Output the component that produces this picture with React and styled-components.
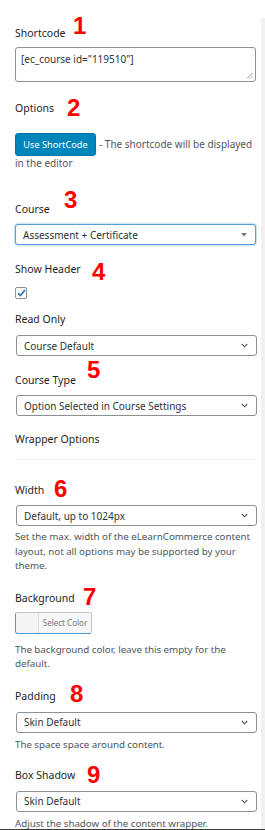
import React from "react";
import styled, { createGlobalStyle } from "styled-components";

const Global = createGlobalStyle`
  html, body { margin: 0; padding: 0; background: #fff; }
  body { font-family: "Noto Sans", "Open Sans", sans-serif; color: #1e1e1e; }
  * { box-sizing: border-box; }
`;

const Page = styled.div`
  display: flex;
  width: 265px;
  height: 830px;
  overflow: hidden;
  border-bottom: 1px solid #3c3c3c;
`;

const Panel = styled.div`
  width: 261px;
  padding: 0 5px 0 15px;
`;

const Track = styled.div`
  width: 4px;
  margin-top: 18px;
  background: #f0f0f1;
`;

const Field = styled.div`
  margin-top: ${(p) => p.$mt}px;
`;

const Label = styled.div`
  position: relative;
  font-size: 10.5px;
  line-height: 14px;
  height: 14px;
  color: #1e1e1e;
  white-space: nowrap;
`;

const Marker = styled.span`
  position: absolute;
  left: ${(p) => p.$x}px;
  top: ${(p) => p.$y}px;
  font-family: "Liberation Sans", Arial, sans-serif;
  font-weight: bold;
  font-size: 24px;
  line-height: 24px;
  color: #ff0000;
`;

const TextArea = styled.div`
  margin-top: 7px;
  position: relative;
  width: 241px;
  height: 35px;
  border: 1px solid #8c8f94;
  border-radius: 3px;
  padding: 4px 5px;
  font-size: 10px;
  line-height: 14px;
  color: #2c3338;
`;

const Grip = styled.svg`
  position: absolute;
  right: 2px;
  bottom: 2px;
`;

const Desc = styled.div`
  margin-top: 18px;
  margin-right: -5px;
  font-size: 10px;
  line-height: 15px;
  color: #50575e;
`;

const DescLine = styled.div`
  display: flex;
  align-items: center;
  gap: 3px;
  white-space: nowrap;
`;

const PrimaryButton = styled.span`
  display: inline-flex;
  align-items: center;
  justify-content: center;
  flex: none;
  width: 81px;
  height: 23px;
  background: #0085ba;
  border: 1px solid #0073aa;
  border-radius: 3px;
  color: #fff;
  font-size: 9.2px;
  white-space: nowrap;
`;

const DescRest = styled.div`
  margin-top: 0;
`;

const Select = styled.div`
  margin-top: ${(p) => p.$mt ?? 8}px;
  margin-left: ${(p) => p.$ml ?? 1}px;
  width: 241px;
  height: 21px;
  display: flex;
  align-items: center;
  justify-content: space-between;
  padding: 0 8px 0 7px;
  border: 1px solid ${(p) => (p.$focus ? "#5b9dd9" : "#8c8f94")};
  box-shadow: ${(p) => (p.$focus ? "0 0 2px rgba(30,140,190,.8)" : "none")};
  border-radius: 3px;
  font-size: 10px;
  color: #2c3338;
  background: #fff;
`;

const Check = styled.div`
  margin-top: 11px;
  width: 12px;
  height: 12px;
  border: 1px solid #8c8f94;
  border-radius: 2px;
  display: flex;
  align-items: center;
  justify-content: center;
`;

const Divider = styled.div`
  margin-top: 13px;
  width: 241px;
  height: 1px;
  background: #f0f0f1;
`;

const Help = styled.div`
  margin-top: ${(p) => p.$mt ?? 4}px;
  margin-right: -5px;
  font-size: 9.8px;
  letter-spacing: -0.05px;
  line-height: ${(p) => p.$lh ?? 14}px;
  color: #50575e;
`;

const ColorButton = styled.div`
  margin-top: 7px;
  display: flex;
  width: 77px;
  height: 22px;
  border: 1px solid #c3c4c7;
  border-left-color: #4f94d4;
  border-bottom-color: #4f94d4;
  border-radius: 3px;
  overflow: hidden;
`;

const Swatch = styled.div`
  width: 23px;
  background: #f3f4f5;
  border-right: 1px solid #dcdcde;
`;

const ColorText = styled.div`
  flex: 1;
  display: flex;
  align-items: center;
  justify-content: center;
  background: #f6f7f7;
  font-size: 8px;
  color: #787c82;
`;

const Chevron = () => (
  <svg width="7" height="5" viewBox="0 0 7 5">
    <path d="M0.8 1 L3.5 3.8 L6.2 1" fill="none" stroke="#50575e" strokeWidth="1.1" />
  </svg>
);

const Caret = () => (
  <svg width="6" height="4" viewBox="0 0 6 4">
    <path d="M0 0 H6 L3 3.5 Z" fill="#777" />
  </svg>
);

const Dropdown = ({ value, mt, focus, ml }) => (
  <Select $mt={mt} $focus={focus} $ml={ml}>
    <span>{value}</span>
    {focus ? <Caret /> : <Chevron />}
  </Select>
);

export default function App() {
  return (
    <>
      <Global />
      <Page>
        <Panel>
          <Field $mt={26}>
            <Label>
              Shortcode<Marker $x={58} $y={-12}>1</Marker>
            </Label>
            <TextArea>
              [ec_course id="119510"]
              <Grip width="7" height="7" viewBox="0 0 7 7">
                <path d="M1 6.5 L6.5 1 M4 6.5 L6.5 4" stroke="#8c8f94" strokeWidth="0.9" />
              </Grip>
            </TextArea>
          </Field>

          <Field $mt={19}>
            <Label>
              Options<Marker $x={52} $y={-5}>2</Marker>
            </Label>
            <Desc>
              <DescLine>
                <PrimaryButton>Use ShortCode</PrimaryButton>
                <span>- The shortcode will be displayed</span>
              </DescLine>
              <DescRest>in the editor</DescRest>
            </Desc>
          </Field>

          <Field $mt={31}>
            <Label>
              Course<Marker $x={49} $y={-14}>3</Marker>
            </Label>
            <Dropdown value="Assessment + Certificate" focus ml={0} />
          </Field>

          <Field $mt={17}>
            <Label>
              Show Header<Marker $x={77} $y={-2}>4</Marker>
            </Label>
            <Check>
              <svg width="9" height="8" viewBox="0 0 9 8">
                <path d="M1 4.2 L3.4 6.5 L8 1" fill="none" stroke="#2271b1" strokeWidth="1.6" />
              </svg>
            </Check>
          </Field>

          <Field $mt={13}>
            <Label>Read Only</Label>
            <Dropdown value="Course Default" mt={9} />
          </Field>

          <Field $mt={17}>
            <Label>
              Course Type<Marker $x={72} $y={-15}>5</Marker>
            </Label>
            <Dropdown value="Option Selected in Course Settings" />
          </Field>

          <Field $mt={16}>
            <Label>Wrapper Options</Label>
            <Divider />
          </Field>

          <Field $mt={23}>
            <Label>
              Width<Marker $x={39} $y={-6}>6</Marker>
            </Label>
            <Dropdown value="Default, up to 1024px" />
            <Help $lh={14.5}>
              Set the max. width of the eLearnCommerce content layout, not all options may be supported by your theme.
            </Help>
          </Field>

          <Field $mt={17}>
            <Label>
              Background<Marker $x={68} $y={-6}>7</Marker>
            </Label>
            <ColorButton>
              <Swatch />
              <ColorText>Select Color</ColorText>
            </ColorButton>
            <Help $mt={9}>The background color, leave this empty for the default.</Help>
          </Field>

          <Field $mt={18}>
            <Label>
              Padding<Marker $x={55} $y={-7}>8</Marker>
            </Label>
            <Dropdown value="Skin Default" mt={9} />
            <Help $mt={5}>The space space around content.</Help>
          </Field>

          <Field $mt={16}>
            <Label>
              Box Shadow<Marker $x={72} $y={-5}>9</Marker>
            </Label>
            <Dropdown value="Skin Default" mt={9} />
            <Help $mt={5}>Adjust the shadow of the content wrapper.</Help>
          </Field>
        </Panel>
        <Track />
      </Page>
    </>
  );
}
